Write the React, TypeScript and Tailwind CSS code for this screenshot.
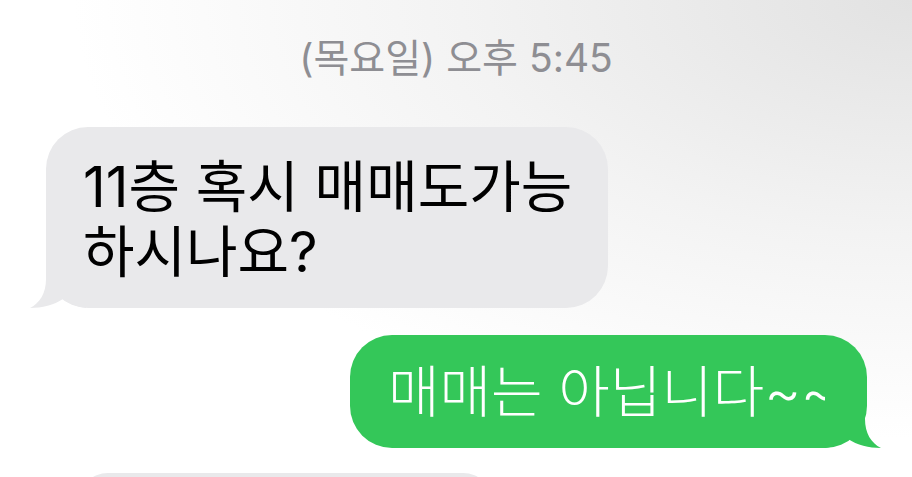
import React from 'react';

const font = "font-['Inter','Noto_Sans_CJK_KR',sans-serif]";

// bubble tail, drawn for the left side; mirror it for outgoing bubbles
const Tail: React.FC<{ color: string; flip?: boolean }> = ({ color, flip }) => (
  <svg
    width="56"
    height="60"
    viewBox="0 0 56 60"
    className={`absolute bottom-0 ${flip ? '-right-[14px] scale-x-[-1]' : '-left-[16px]'}`}
  >
    <path d="M16,0 L16,31 C16,45 10,55 0,60 C12,60 24,57 33,51 C38,55 44,58 56,60 L56,0 Z" fill={color} />
  </svg>
);

export default function App() {
  return (
    <div
      className={`h-[477px] w-[912px] overflow-hidden flex flex-col bg-[radial-gradient(ellipse_at_top_right,#e2e2e2_0%,#f3f3f3_35%,#ffffff_65%)] ${font}`}
    >
      {/* timestamp */}
      <div className="shrink-0 mt-[36px] text-center text-[39px] leading-[44px] text-[#8e8e93]">
        (목요일) 오후 5:45
      </div>

      {/* incoming */}
      <div className="relative shrink-0 mt-[47px] ml-[46px] w-[562px] h-[181px] rounded-[42px] bg-[#e9e9eb] pl-[37px] pt-[28px]">
        <p className="text-[56px] leading-[65px] text-black whitespace-nowrap">
          11층 혹시 매매도가능
          <br />
          하시나요?
        </p>
        <Tail color="#e9e9eb" />
      </div>

      {/* outgoing */}
      <div className="relative shrink-0 mt-[27px] self-end mr-[45px] w-[517px] h-[113px] rounded-[42px] bg-[#34c759] pl-[38px] flex items-center">
        <p className="text-[56px] leading-[64px] text-white font-light whitespace-nowrap">매매는 아닙니다~~</p>
        <Tail color="#34c759" flip />
      </div>

      {/* next incoming, cut off */}
      <div className="shrink-0 mt-[25px] ml-[78px] w-[415px] h-[60px] rounded-[30px] bg-[#e9e9eb]" />
    </div>
  );
}
